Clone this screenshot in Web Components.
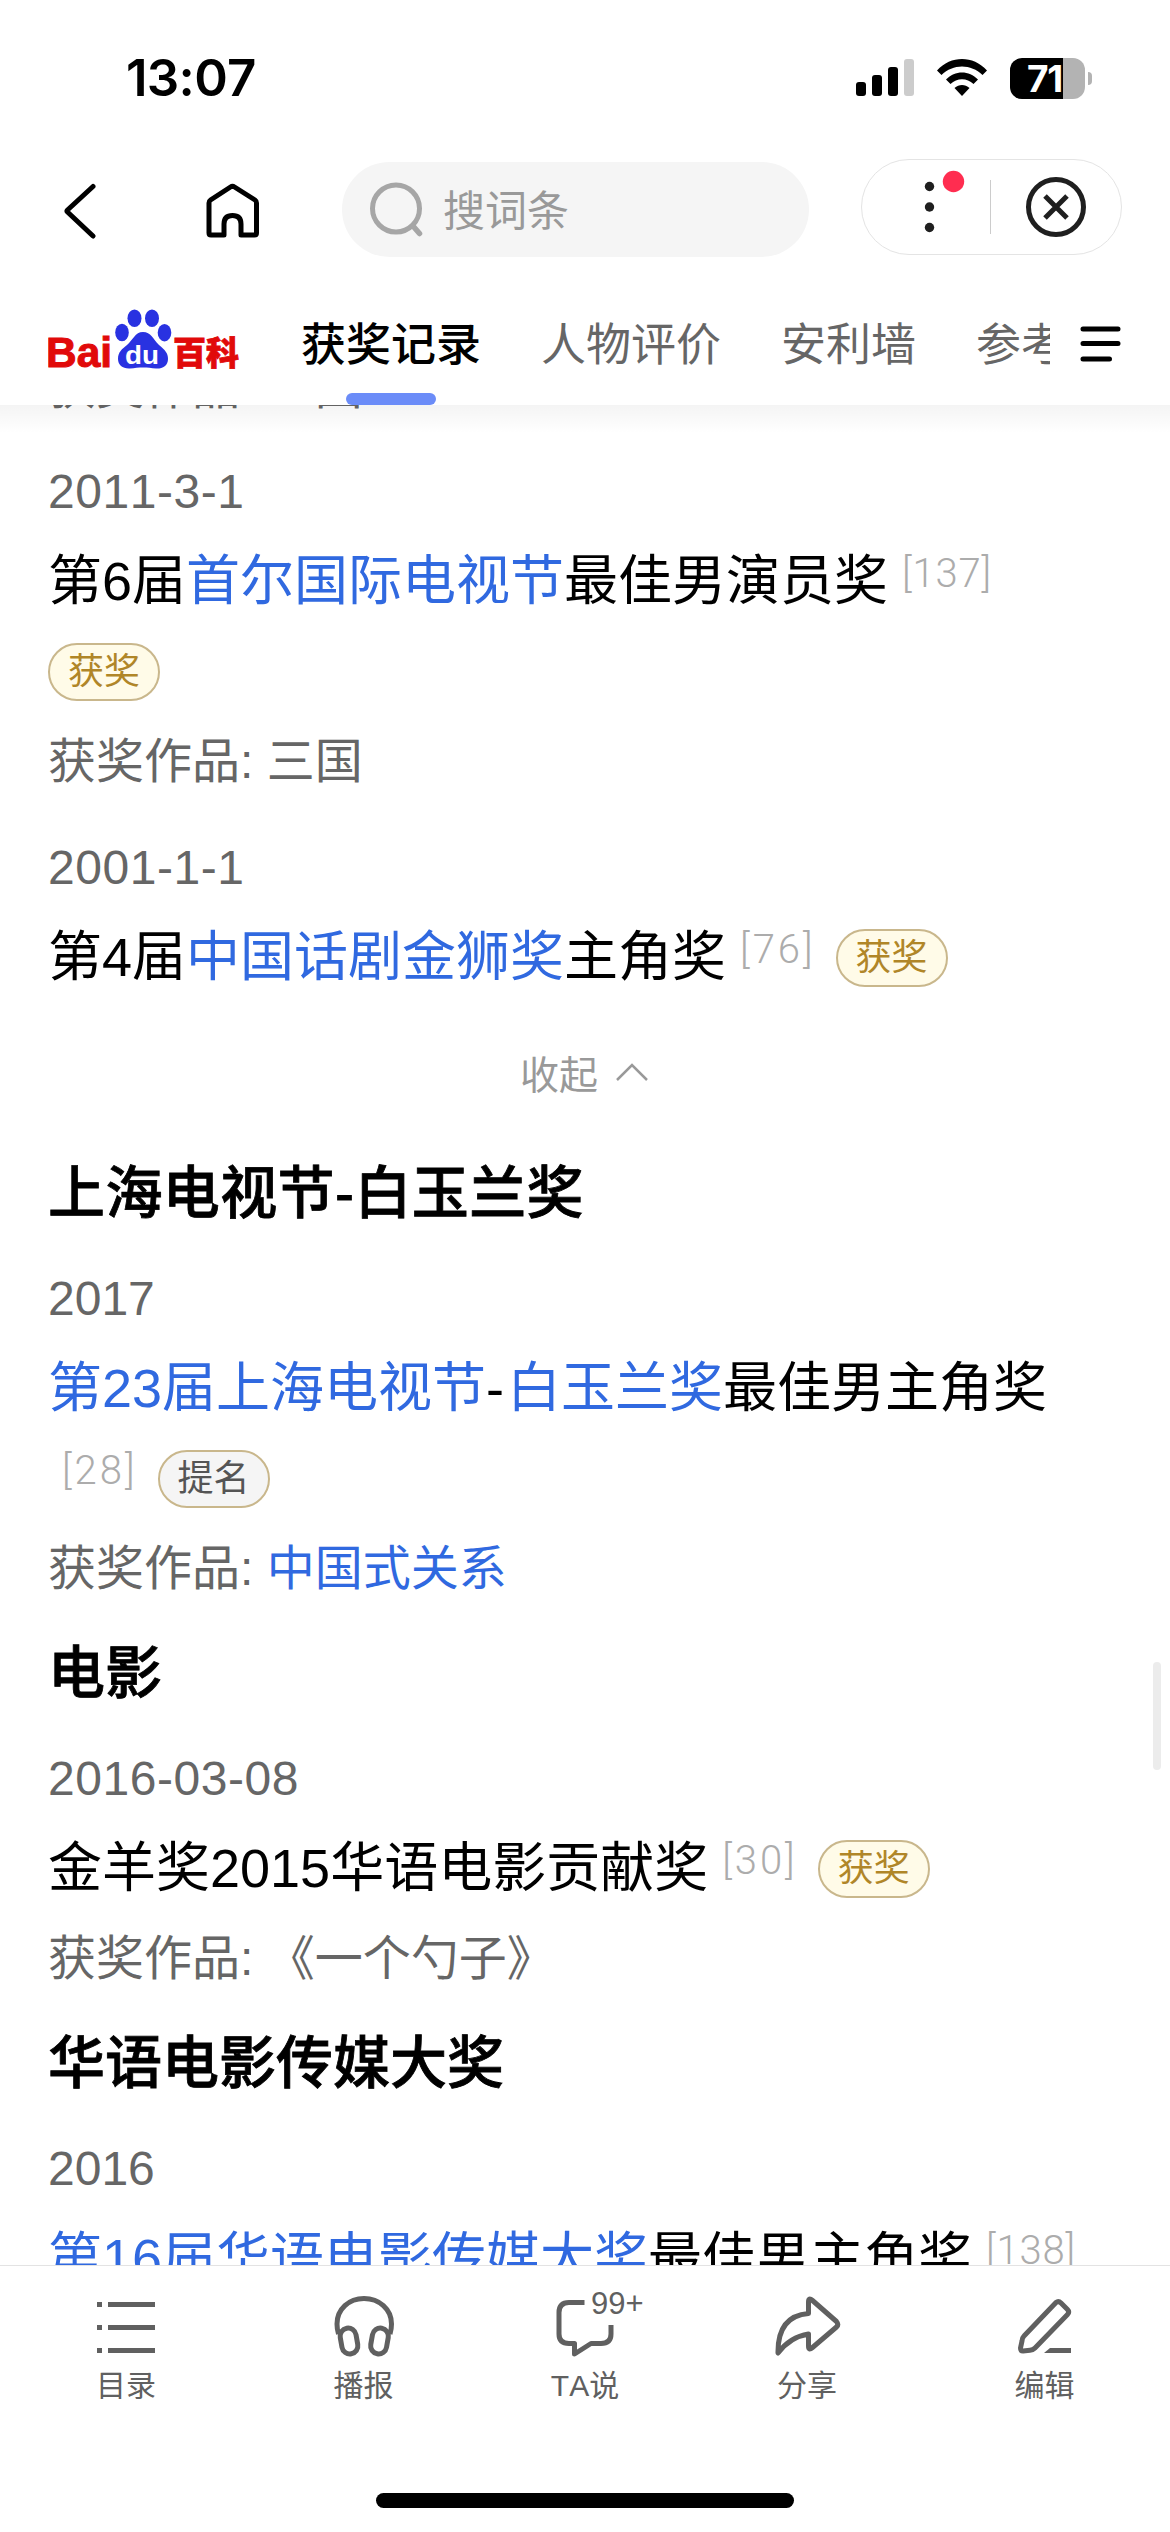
<!DOCTYPE html>
<html lang="zh-CN">
<head>
<meta charset="UTF-8">
<meta name="viewport" content="width=device-width, initial-scale=1">
<title>获奖记录 - 百度百科</title>
<style>
    body {
        margin: 0;
        background: #fff;
        font-family: "Liberation Sans", "Noto Sans CJK SC", sans-serif;
        font-kerning: none;
        color: #000;
    }
    /* room for the dash between two links */
    wiki-link + wiki-link { margin-left: 3px; }
</style>
</head>
<body>
<baike-page>
    <status-bar slot="header" time="13:07" battery="71"></status-bar>
    <nav-bar slot="header" placeholder="搜词条"></nav-bar>
    <tab-bar slot="header" tabs="获奖记录,人物评价,安利墙,参考" active="0"></tab-bar>

    <award-item><span slot="work">获奖作品: 三国</span></award-item>
    <award-item date="2011-3-1">
        第6届<wiki-link>首尔国际电视节</wiki-link>最佳男演员奖<ref-mark>[137]</ref-mark> <award-badge>获奖</award-badge>
        <span slot="work">获奖作品: 三国</span>
    </award-item>
    <award-item date="2001-1-1">
        第4届<wiki-link>中国话剧金狮奖</wiki-link>主角奖<ref-mark>[76]</ref-mark><award-badge>获奖</award-badge>
    </award-item>
    <fold-toggle>收起</fold-toggle>

    <section-title class="dashed">上海电视节-白玉兰奖</section-title>
    <award-item date="2017">
        <wiki-link>第23届上海电视节</wiki-link>-<wiki-link>白玉兰奖</wiki-link>最佳男主角奖<ref-mark>[28]</ref-mark><award-badge type="nominee">提名</award-badge>
        <span slot="work">获奖作品: <wiki-link>中国式关系</wiki-link></span>
    </award-item>

    <section-title class="follow">电影</section-title>
    <award-item date="2016-03-08">
        金羊奖2015华语电影贡献奖<ref-mark>[30]</ref-mark><award-badge>获奖</award-badge>
        <span slot="work">获奖作品: 《一个勺子》</span>
    </award-item>

    <section-title class="follow">华语电影传媒大奖</section-title>
    <award-item date="2016">
        <wiki-link>第16届华语电影传媒大奖</wiki-link>最佳男主角奖<ref-mark>[138]</ref-mark>
    </award-item>

    <tool-bar slot="footer"></tool-bar>
</baike-page>

<script>
// Attaches an open shadow root with the given markup
class BaseElement extends HTMLElement {
    constructor() {
        super();
        this.attachShadow({ mode: "open" });
    }

    connectedCallback() {
        this.shadowRoot.innerHTML = this.render();
    }
}

class BaikePage extends BaseElement {
    render() {
        return `
            <style>
                :host {
                    display: flex;
                    flex-direction: column;
                    position: relative;
                    width: 1170px;
                    height: 2532px;
                    overflow: hidden;
                    background: #fff;
                }
                header { flex: none; height: 405px; }
                main {
                    flex: 1;
                    min-height: 0;
                    overflow: hidden;
                    position: relative;
                }
                /* soft shadow under the sticky header */
                main::before {
                    content: "";
                    position: absolute;
                    top: 0;
                    left: 0;
                    right: 0;
                    height: 28px;
                    background: linear-gradient(rgba(0,0,0,0.045), rgba(0,0,0,0));
                }
                /* the list is scrolled part way under the header */
                .list { margin-top: -79px; padding: 0 48px; }
                ::slotted(award-item:not([date])) { margin-bottom: -2px; }
                .thumb {
                    position: absolute;
                    top: 1662px;
                    right: 9px;
                    width: 8px;
                    height: 108px;
                    border-radius: 4px;
                    background: #ececec;
                }
            </style>
            <header><slot name="header"></slot></header>
            <main><div class="list"><slot></slot></div></main>
            <slot name="footer"></slot>
            <div class="thumb"></div>
        `;
    }
}

class StatusBar extends BaseElement {
    render() {
        return `
            <style>
                :host {
                    display: flex;
                    align-items: center;
                    justify-content: space-between;
                    box-sizing: border-box;
                    height: 156px;
                    padding: 0 78px 0 126px;
                    font-family: Inter, sans-serif;
                }
                .time { font-size: 51px; font-weight: 600; line-height: 60px; letter-spacing: -0.7px; }
                .icons { display: flex; align-items: center; gap: 23px; }
                svg { display: block; }
                .battery { display: flex; align-items: center; gap: 3px; }
                .cell {
                    width: 75px;
                    height: 41px;
                    box-sizing: border-box;
                    border-radius: 12px;
                    background: linear-gradient(90deg, #000 53px, #b3b3b3 53px);
                    color: #fff;
                    font-size: 37px;
                    font-weight: 700;
                    line-height: 41px;
                    padding-left: 17px;
                    letter-spacing: -1.2px;
                }
                .nub { width: 4px; height: 13px; border-radius: 0 5px 5px 0; background: #b3b3b3; }
            </style>
            <span class="time">${this.getAttribute('time')}</span>
            <div class="icons">
                <svg width="58" height="38" viewBox="0 0 58 38">
                    <rect x="0" y="23" width="10" height="14" rx="3"/>
                    <rect x="16" y="16" width="10" height="21" rx="3"/>
                    <rect x="32" y="8" width="10" height="29" rx="3"/>
                    <rect x="48" y="0" width="10" height="37" rx="3" fill="#ccc"/>
                </svg>
                <svg width="50" height="38" viewBox="0 0 50 38">
                    <path d="M0 11.5C14-3.800 36-3.800 50 11.500L45.500 16C34 4.500 16 4.500 4.500 16Z"/>
                    <path d="M9 20.500C18 11 32 11 41 20.500L36.500 25C30 18.500 20 18.500 13.500 25Z"/>
                    <path d="M17.500 29C22 25 28 25 32.500 29L25 37Z"/>
                </svg>
                <div class="battery">
                    <div class="cell">${this.getAttribute('battery')}</div>
                    <div class="nub"></div>
                </div>
            </div>
        `;
    }
}

class NavBar extends BaseElement {
    render() {
        return `
            <style>
                :host {
                    display: flex;
                    align-items: center;
                    box-sizing: border-box;
                    height: 106px;
                    padding: 1px 48px 0 62px;
                }
                svg { display: block; flex: none; }
                .back, .home { margin-top: 2px; }
                .home { margin-left: 107px; }
                .search {
                    display: flex;
                    align-items: center;
                    width: 467px;
                    height: 95px;
                    margin-left: 82px;
                    border-radius: 48px;
                    background: #f5f5f5;
                    color: #999;
                    font-size: 42px;
                    line-height: 60px;
                    box-sizing: border-box;
                    padding-left: 27px;
                    gap: 19px;
                }
                .search span { padding-top: 5px; }
                .capsule {
                    display: flex;
                    align-items: center;
                    box-sizing: border-box;
                    width: 261px;
                    height: 96px;
                    margin: -5px 0 0 auto;
                    border: 1px solid #e4e4e4;
                    border-radius: 48px;
                }
                .line { width: 1px; height: 54px; background: #ccc; }
            </style>
            <svg class="back" width="36" height="56" viewBox="0 0 36 56" fill="none" stroke="#000" stroke-width="5" stroke-linecap="round" stroke-linejoin="round">
                <path d="M31 3.500 5.500 27Q4.500 28 5.500 29L31 53"/>
            </svg>
            <svg class="home" width="55" height="56" viewBox="0 0 55 56" fill="none" stroke="#000" stroke-width="5" stroke-linejoin="round">
                <path d="M25.500 4Q27.500 2.700 29.500 4L50 17Q51.500 18 51.500 20V50Q51.500 52 49.500 52H36V41Q36 32.500 27.500 32.500T19 41V52H6Q4 52 4 50V20Q4 18 5.500 17Z"/>
            </svg>
            <div class="search">
                <svg width="55" height="56" viewBox="0 0 55 56" fill="none" stroke="#a6a6a6" stroke-width="5">
                    <circle cx="27" cy="26.500" r="23.500"/>
                    <path d="M44 44 50.500 51.500" stroke-width="5.500" stroke-linecap="round"/>
                </svg>
                <span>${this.getAttribute('placeholder')}</span>
            </div>
            <div class="capsule">
                <svg width="128" height="94" viewBox="0 0 128 94" fill="#1f1f1f">
                    <circle cx="67.500" cy="26.500" r="4.700"/>
                    <circle cx="67.500" cy="47" r="4.700"/>
                    <circle cx="67.500" cy="67.500" r="4.700"/>
                    <circle cx="91.500" cy="21.500" r="10.700" fill="#ff2d50"/>
                </svg>
                <div class="line"></div>
                <svg width="130" height="94" viewBox="0 0 130 94" fill="none" stroke="#1f1f1f" stroke-width="5">
                    <circle cx="65" cy="47" r="27.500"/>
                    <path d="M54 36 76 58M76 36 54 58"/>
                </svg>
            </div>
        `;
    }
}

class BaikeLogo extends BaseElement {
    render() {
        return `
            <style>
                :host { display: block; }
                svg { display: block; }
                .latin { font-family: "Liberation Sans", sans-serif; font-weight: 700; }
                .cjk { font-family: "Noto Sans CJK SC", sans-serif; font-weight: 900; }
            </style>
            <svg width="192" height="62" viewBox="0 0 192 62">
                <text class="latin" x="-2" y="58" font-size="42" fill="#e10a0a" stroke="#e10a0a" stroke-width="1" textLength="66" lengthAdjust="spacingAndGlyphs">Bai</text>
                <g fill="#2932e1">
                    <ellipse cx="74" cy="23.500" rx="6.800" ry="8.700"/>
                    <ellipse cx="86.500" cy="9.300" rx="7" ry="8.800"/>
                    <ellipse cx="104" cy="9.300" rx="7" ry="8.800"/>
                    <ellipse cx="116.500" cy="23.700" rx="6.800" ry="8.700"/>
                    <path d="M95 23C103 23 105 30 111 36C117 41 120 44 120 50C120 57 114 60 108 59.500C103 59 100 58.500 95 58.500S87 59 82 59.500C75 60 70 56 70 50C70 43 74 40 79 36C85 31 87 23 95 23Z"/>
                </g>
                <text class="latin" x="77" y="54.500" font-size="25" fill="#fff" textLength="34" lengthAdjust="spacingAndGlyphs">du</text>
                <text class="cjk" x="125" y="56" font-size="33" fill="#e10a0a" stroke="#e10a0a" stroke-width="0.800">百科</text>
            </svg>
        `;
    }
}

class TabBar extends BaseElement {
    buildTabs() {
        const active = parseInt(this.getAttribute('active') || '0', 10);
        return this.getAttribute('tabs').split(',').map((tab, index) =>
            `<div class="tab${index === active ? ' active' : ''}">${tab}</div>`
        ).join('');
    }

    render() {
        return `
            <style>
                :host {
                    display: flex;
                    box-sizing: border-box;
                    height: 143px;
                    padding: 0 49px 0 48px;
                }
                baike-logo { flex: none; margin: 47px 61px 0 0; }
                .tabs {
                    display: flex;
                    gap: 60px;
                    width: 749px;
                    overflow: hidden;
                    font-size: 45px;
                    color: #666;
                }
                .tab {
                    display: flex;
                    flex-direction: column;
                    align-items: center;
                    flex: none;
                    height: 143px;
                    line-height: 167px;
                }
                .active { color: #000; font-weight: 500; }
                .active::after {
                    content: "";
                    width: 90px;
                    height: 12px;
                    margin-top: -36px;
                    border-radius: 6px;
                    background: #6b8cf8;
                }
                svg { display: block; margin: 64px 0 0 auto; }
            </style>
            <baike-logo></baike-logo>
            <div class="tabs">${this.buildTabs()}</div>
            <svg width="41" height="38" viewBox="0 0 41 38" stroke="#000" stroke-width="5" stroke-linecap="round">
                <path d="M3 3H38M3 17.500H38M3 33H29.500"/>
            </svg>
        `;
    }
}

class AwardItem extends BaseElement {
    render() {
        const date = this.getAttribute('date');
        return `
            <style>
                :host { display: block; padding-top: 16px; }
                .date { font-size: 48px; line-height: 88px; color: #666; }
                .full { letter-spacing: 0.55px; }
                .name { font-size: 54px; line-height: 90px; }
                .work { font-size: 48px; line-height: 92px; color: #666; white-space: nowrap; }
            </style>
            ${date ? `<div class="date${date.includes('-') ? ' full' : ''}">${date}</div><div class="name"><slot></slot></div>` : ''}
            ${this.querySelector('[slot="work"]') ? '<div class="work"><slot name="work"></slot></div>' : ''}
        `;
    }
}

class WikiLink extends BaseElement {
    // inline element: no whitespace may stand around the slot
    render() {
        return '<style>:host { color: #3069e0; }</style><slot></slot>';
    }
}

class RefMark extends BaseElement {
    render() {
        return `
            <style>
                :host {
                    display: inline-block;
                    height: 40px;
                    margin: -20px 20px 0 14px;
                    font-family: Roboto, sans-serif;
                    font-size: 40px;
                    font-weight: 300;
                    line-height: 60px;
                    letter-spacing: ${this.textContent.length > 4 ? 0.8 : 3}px;
                    color: #acacac;
                    vertical-align: 13px;
                }
            </style>
            <slot></slot>
        `;
    }
}

class AwardBadge extends BaseElement {
    render() {
        const nominee = this.getAttribute('type') === 'nominee';
        return `
            <style>
                :host {
                    display: inline-block;
                    box-sizing: border-box;
                    width: 112px;
                    height: 58px;
                    margin: -10px 0;
                    border: 2px solid #c9b78c;
                    border-radius: 29px;
                    background: ${nominee ? '#f5f5f5' : '#fffbe8'};
                    color: ${nominee ? '#555' : '#b08628'};
                    font-size: 36px;
                    line-height: 54px;
                    text-align: center;
                    vertical-align: 6px;
                }
            </style>
            <slot></slot>
        `;
    }
}

class SectionTitle extends BaseElement {
    render() {
        return `
            <style>
                :host {
                    display: block;
                    font-size: 57px;
                    font-weight: 500;
                    line-height: 91px;
                    -webkit-text-stroke: 0.8px #000;
                }
                :host(.follow) { margin-top: 13px; }
                :host(.dashed) { letter-spacing: 0.4px; }
            </style>
            <slot></slot>
        `;
    }
}

class FoldToggle extends BaseElement {
    render() {
        return `
            <style>
                :host {
                    display: flex;
                    align-items: center;
                    justify-content: center;
                    gap: 18px;
                    box-sizing: border-box;
                    height: 146px;
                    padding: 0 2px 7px 0;
                    font-size: 39px;
                    color: #999;
                }
            </style>
            <span><slot></slot></span>
            <svg width="32" height="18" viewBox="0 0 32 18" fill="none" stroke="#999" stroke-width="2.500">
                <path d="M1 17 16 2 31 17"/>
            </svg>
        `;
    }
}

class ToolItem extends BaseElement {
    render() {
        return `
            <style>
                :host {
                    display: flex;
                    flex-direction: column;
                    align-items: center;
                    position: relative;
                    font-size: 30px;
                    line-height: 40px;
                    color: #606060;
                }
                .label { margin-top: 5px; }
                .count {
                    position: absolute;
                    left: calc(50% + 6px);
                    top: -9px;
                    font-size: 31px;
                    line-height: 44px;
                }
            </style>
            <slot name="icon"></slot>
            ${this.hasAttribute('count') ? `<span class="count">${this.getAttribute('count')}</span>` : ''}
            <span class="label">${this.getAttribute('label')}</span>
        `;
    }
}

class ToolBar extends BaseElement {
    render() {
        return `
            <style>
                :host {
                    display: flex;
                    flex-direction: column;
                    flex: none;
                    align-items: center;
                    justify-content: space-between;
                    box-sizing: border-box;
                    height: 267px;
                    padding-bottom: 24px;
                    border-top: 1px solid #e3e3e3;
                    background: #fff;
                }
                .items {
                    display: grid;
                    grid-template-columns: 252px 223px 220px 224px 251px;
                    padding-top: 25px;
                }
                svg {
                    display: block;
                    width: 70px;
                    height: 70px;
                    fill: none;
                    stroke: #606060;
                    stroke-width: 5;
                    stroke-linejoin: round;
                }
                .indicator { width: 418px; height: 15px; border-radius: 8px; background: #000; }
            </style>
            <div class="items">
                <tool-item label="目录">
                    <svg slot="icon" viewBox="0 0 70 70">
                        <path d="M6 13.500H11M6 36.500H11M6 59.500H11M17 13.500H64M17 36.500H64M17 59.500H64"/>
                    </svg>
                </tool-item>
                <tool-item label="播报">
                    <svg slot="icon" viewBox="0 0 70 70">
                        <path d="M9.500 43C8 38 8 34 8 33C8 18 20 7.500 35 7.500S62.500 18 62.500 33C62.500 35 62.500 38 61 43"/>
                        <rect x="12" y="37" width="16" height="26" rx="8" transform="rotate(-10 20 50)"/>
                        <rect x="42.500" y="37" width="16" height="26" rx="8" transform="rotate(10 50.500 50)"/>
                    </svg>
                </tool-item>
                <tool-item label="TA说" count="99+">
                    <svg slot="icon" viewBox="0 0 70 70">
                        <path d="M34.500 11.500H19Q9 11.500 9 21.500V43Q9 52.500 19 52.500H24.500V63L41 52.500H51Q61 52.500 61 43V34"/>
                    </svg>
                </tool-item>
                <tool-item label="分享">
                    <svg slot="icon" viewBox="0 0 70 70">
                        <path d="M36.500 11Q36.500 6 40.500 9.500L64.500 30.500Q67 33.500 64.500 36L40.500 56.500Q36.500 60 36.500 55V43Q18 46 6 62Q5.500 25 36.500 22.500Z"/>
                    </svg>
                </tool-item>
                <tool-item label="编辑">
                    <svg slot="icon" viewBox="0 0 70 70">
                        <path d="M46 11.500Q48.500 9.500 51 12L57.500 18.500Q60 21 57.500 23.500L25 57Q23 59 20 59.300L13 60Q10.500 60 10.500 57L12 50Q12 47 14 45Z"/>
                        <path d="M40 57H61V62H34Z" fill="#606060" stroke="none"/>
                    </svg>
                </tool-item>
            </div>
            <div class="indicator"></div>
        `;
    }
}

customElements.define('baike-page', BaikePage);
customElements.define('status-bar', StatusBar);
customElements.define('nav-bar', NavBar);
customElements.define('baike-logo', BaikeLogo);
customElements.define('tab-bar', TabBar);
customElements.define('wiki-link', WikiLink);
customElements.define('ref-mark', RefMark);
customElements.define('award-badge', AwardBadge);
customElements.define('award-item', AwardItem);
customElements.define('section-title', SectionTitle);
customElements.define('fold-toggle', FoldToggle);
customElements.define('tool-item', ToolItem);
customElements.define('tool-bar', ToolBar);
</script>
</body>
</html>
